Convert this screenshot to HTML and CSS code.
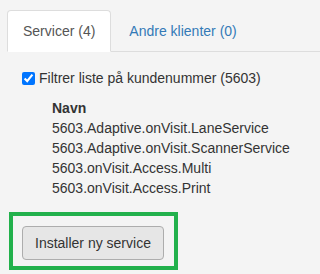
FILE: index.html
```html
<!DOCTYPE html>
<html lang="no">
<head>
<meta charset="utf-8">
<title>Servicer</title>
<link rel="stylesheet" href="styles.css">
</head>
<body>
<ul class="tabs">
  <li class="tab active">Servicer (4)</li>
  <li class="tab link">Andre klienter (0)</li>
</ul>
<div class="content">
  <label class="filter"><input type="checkbox" checked><span>Filtrer liste på kundenummer (5603)</span></label>
  <div class="list">
    <div class="head">Navn</div>
    <div class="row">5603.Adaptive.onVisit.LaneService</div>
    <div class="row">5603.Adaptive.onVisit.ScannerService</div>
    <div class="row">5603.onVisit.Access.Multi</div>
    <div class="row">5603.onVisit.Access.Print</div>
  </div>
</div>
<div class="highlight">
  <button class="btn" type="button">Installer ny service</button>
</div>
</body>
</html>
```
FILE: styles.css
```css
html, body {
  margin: 0;
  padding: 0;
  background: #f4f4f4;
}
body {
  font-family: "Liberation Sans", Arial, sans-serif;
  font-size: 14px;
  line-height: 20px;
  color: #333;
}
.tabs {
  list-style: none;
  margin: 10px 0 0 7px;
  padding: 0;
  display: flex;
  border-bottom: 1px solid #ddd;
}
.tab {
  padding: 10px 15px;
  border: 1px solid transparent;
  border-radius: 4px 4px 0 0;
  margin-right: 2px;
  margin-bottom: -1px;
}
.tab.active {
  background: #fff;
  border-color: #ddd;
  border-bottom-color: #fff;
  color: #555;
}
.tab.link {
  color: #337ab7;
}
.content {
  padding: 16px 0 0 22px;
}
.filter {
  display: flex;
  align-items: flex-start;
}
.filter input {
  width: 13px;
  height: 13px;
  margin: 4px 4px 0 0;
  accent-color: #0075ff;
}
.list {
  margin-top: 10px;
  padding-left: 30px;
}
.head {
  font-weight: bold;
}
.highlight {
  width: fit-content;
  margin: 14px 0 0 9px;
  border: 4px solid #22b14c;
  padding: 10px 10px 6px 9px;
}
.btn {
  display: block;
  font-family: "Liberation Sans", Arial, sans-serif;
  font-size: 14px;
  line-height: 20px;
  padding: 6px 12px;
  color: #333;
  background: #e6e6e6;
  border: 1px solid #adadad;
  border-radius: 4px;
}
```
